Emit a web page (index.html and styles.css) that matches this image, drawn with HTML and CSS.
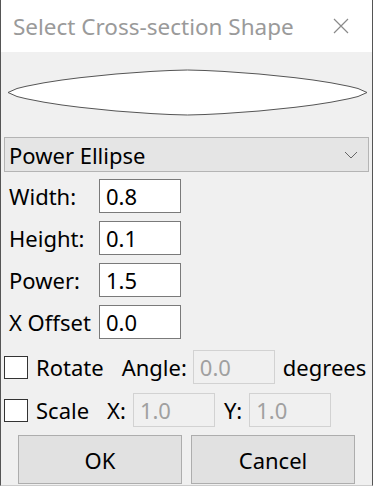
FILE: index.html
```html
<!DOCTYPE html>
<html lang="en">
<head>
    <meta charset="UTF-8">
    <meta name="viewport" content="width=device-width, initial-scale=1.0">
    <title>Select Cross-section Shape</title>
    <link rel="stylesheet" href="styles.css">
</head>
<body>
    <div class="window">
        <div class="titlebar">
            <span class="title">Select Cross-section Shape</span>
            <svg class="close" width="16" height="16" viewBox="0 0 16 16">
                <path d="M1 1 L15 15 M15 1 L1 15" stroke="#8a8a8a" stroke-width="1.2" fill="none"/>
            </svg>
        </div>
        <div class="content">
            <div class="preview">
                <svg width="365" height="85" viewBox="3 52 365 85">
                    <polygon fill="#fff" stroke="#555" stroke-width="1"
                        points="7,92.5 16,88.5 25,86.3 43,82.8 61,80 79,77.7 115,74 151,71.4 169,70.5 186.5,70 204,70.5 222,71.4 258,74 294,77.7 312,80 330,82.8 348,86.3 357,88.5 366,92.5 357,96.5 348,98.7 330,102.2 312,105 294,107.3 258,111 222,113.6 204,114.5 186.5,115 169,114.5 151,113.6 115,111 79,107.3 61,105 43,102.2 25,98.7 16,96.5"/>
                </svg>
            </div>
            <div class="shape-select">
                <span>Power Ellipse</span>
                <svg width="14" height="8" viewBox="0 0 14 8">
                    <path d="M1 1 L7 7 L13 1" stroke="#666" stroke-width="1" fill="none"/>
                </svg>
            </div>
            <div class="field">
                <label>Width:</label>
                <div class="input">0.8</div>
            </div>
            <div class="field">
                <label>Height:</label>
                <div class="input">0.1</div>
            </div>
            <div class="field">
                <label>Power:</label>
                <div class="input">1.5</div>
            </div>
            <div class="field">
                <label>X Offset</label>
                <div class="input">0.0</div>
            </div>
            <div class="option rotate">
                <span class="check"></span>
                <span class="check-label">Rotate</span>
                <span class="sub-label angle-label">Angle:</span>
                <div class="input disabled">0.0</div>
                <span class="unit">degrees</span>
            </div>
            <div class="option scale">
                <span class="check"></span>
                <span class="check-label">Scale</span>
                <span class="sub-label x-label">X:</span>
                <div class="input disabled">1.0</div>
                <span class="sub-label y-label">Y:</span>
                <div class="input disabled">1.0</div>
            </div>
            <div class="buttons">
                <button type="button">OK</button>
                <button type="button">Cancel</button>
            </div>
        </div>
    </div>
</body>
</html>
```
FILE: styles.css
```css
body {
    margin: 0;
    font-family: "Noto Sans", "Open Sans", sans-serif;
    font-size: 22px;
    color: #000;
    background-color: #fff;
}
.window {
    width: 373px;
    height: 486px;
    box-sizing: border-box;
    border-left: 1px solid #555;
    border-right: 1px solid #555;
    border-bottom: 1px solid #ccc;
    display: flex;
    flex-direction: column;
}
.titlebar {
    height: 52px;
    background-color: #fff;
    display: flex;
    align-items: center;
    justify-content: space-between;
    padding: 0 23px 0 12px;
}
.title {
    color: #9a9a9a;
    font-size: 22.5px;
}
.close {
    display: block;
}
.content {
    flex: 1;
    background-color: #f0f0f0;
    padding: 0 3px;
}
.preview svg {
    display: block;
}
.shape-select {
    height: 35px;
    box-sizing: border-box;
    border: 1px solid #b4b4b4;
    background-color: #e5e5e5;
    display: flex;
    align-items: center;
    justify-content: space-between;
    padding: 0 10px 0 4px;
}
.field {
    display: flex;
    align-items: center;
    margin-top: 8px;
}
.shape-select + .field {
    margin-top: 7px;
}
.field label {
    width: 95px;
    padding-left: 5px;
    box-sizing: border-box;
    white-space: nowrap;
}
.input {
    width: 82px;
    height: 34px;
    box-sizing: border-box;
    border: 1px solid #7a7a7a;
    background-color: #fff;
    padding-left: 6px;
    display: flex;
    align-items: center;
}
.input.disabled {
    border-color: #d2d2d2;
    background-color: #f0f0f0;
    color: #a0a0a0;
}
.option {
    display: flex;
    align-items: center;
    white-space: nowrap;
}
.rotate {
    margin-top: 11px;
}
.scale {
    margin-top: 9px;
}
.check {
    width: 24px;
    height: 23px;
    box-sizing: border-box;
    border: 1px solid #333;
    background-color: #fff;
}
.check-label {
    margin-left: 8px;
}
.angle-label {
    margin-left: 18px;
    margin-right: 6px;
}
.unit {
    margin-left: 8px;
}
.x-label {
    margin-left: 18px;
    margin-right: 7px;
}
.y-label {
    margin-left: 9px;
    margin-right: 7px;
}
.buttons {
    display: flex;
    gap: 9px;
    margin-top: 8px;
    padding-left: 14px;
}
button {
    width: 164px;
    height: 49px;
    border: 1px solid #adadad;
    background-color: #e1e1e1;
    font-family: inherit;
    font-size: 22px;
    color: #000;
    padding: 0;
}
```
